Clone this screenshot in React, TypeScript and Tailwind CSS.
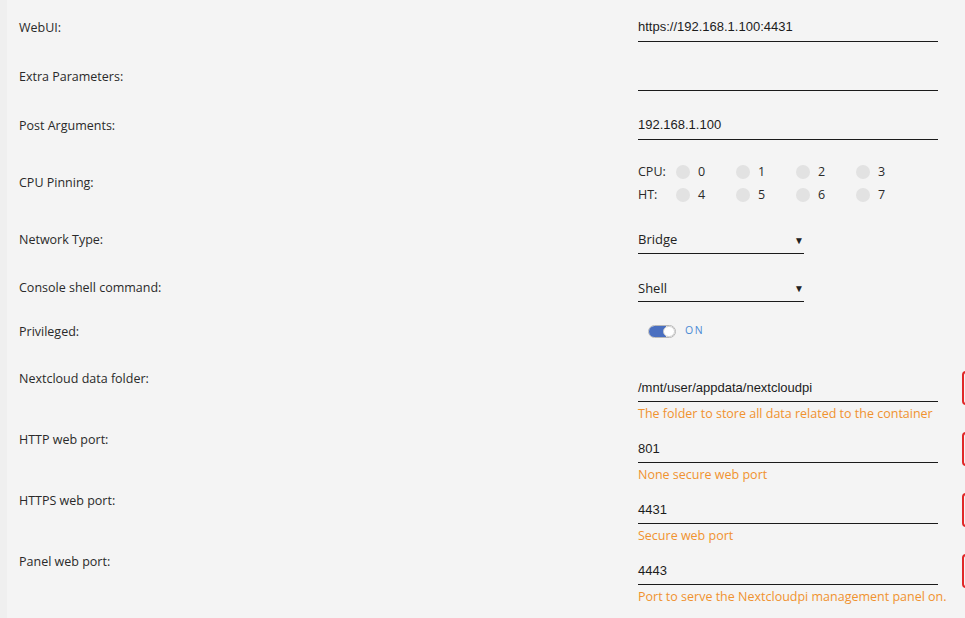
import { useState } from 'react';

const label = "text-[12.5px] text-[#2a2a2a] font-['Open_Sans',sans-serif]";
const value = "text-[13px] text-[#1c1c1c] font-['Liberation_Sans',Arial,sans-serif]";

function TextRow({ name, val, h = 'h-[49px]' }: { name: string; val: string; h?: string }) {
    return (
        <div className={`flex items-center ${h}`}>
            <div className={`w-[619px] pt-[2px] ${label}`}>{name}</div>
            <div className={`w-[300px] h-[28px] flex items-center border-b border-[#1a1a1a] ${value}`}>{val}</div>
        </div>
    );
}

function SelectRow({ name, val, h }: { name: string; val: string; h: string }) {
    return (
        <div className={`flex items-center ${h}`}>
            <div className={`w-[619px] pt-[2px] ${label}`}>{name}</div>
            <div className="w-[166px] h-[28px] mt-[1px] flex items-center justify-between border-b border-[#1a1a1a] text-[13px] text-[#222] font-['Open_Sans',sans-serif]">
                <span className="pt-[2px]">{val}</span>
                <span className="text-[10px] pt-[2px]">▼</span>
            </div>
        </div>
    );
}

function ConfigRow({ name, val, desc }: { name: string; val: string; desc: string }) {
    return (
        <div className="flex items-start mb-[10px]">
            <div className={`w-[619px] leading-[16px] ${label}`}>{name}</div>
            <div className="w-[300px] pt-[3px]">
                <div className={`h-[28px] pt-[1px] flex items-center border-b border-[#1a1a1a] ${value}`}>{val}</div>
                <div className="mt-[4px] leading-[16px] text-[12.5px] text-[#f0922f] font-['Open_Sans',sans-serif] whitespace-nowrap">{desc}</div>
            </div>
            <div className="ml-[24px] w-[60px] h-[34px] shrink-0 rounded-[4px] border-2 border-[#e02828]" />
        </div>
    );
}

function Dot() {
    return <span className="inline-block w-[14px] h-[14px] rounded-full bg-[#e2e2e2]" />;
}

export default function App() {
    const [on, setOn] = useState(true);
    const cpus = [[0, 1, 2, 3], [4, 5, 6, 7]];

    return (
        <div className="w-[965px] h-[618px] overflow-hidden bg-[#efefef] flex">
            <div className="w-[7px] shrink-0" />
            <div className="flex-1 bg-[#f4f4f4] pl-[12px] pt-[3px]">
                <TextRow name="WebUI:" val="https://192.168.1.100:4431" />
                <TextRow name="Extra Parameters:" val="" />
                <TextRow name="Post Arguments:" val="192.168.1.100" />

                {/* CPU pinning */}
                <div className="flex items-center h-[65px]">
                    <div className={`w-[619px] pt-[2px] ${label}`}>CPU Pinning:</div>
                    <div className="flex flex-col pt-[2px]">
                        {cpus.map((row, i) => (
                            <div key={i} className="flex items-center h-[23px]">
                                <span className={`w-[38px] pt-[1px] ${label}`}>{i === 0 ? 'CPU:' : 'HT:'}</span>
                                {row.map(n => (
                                    <span key={n} className="flex items-center w-[60px]">
                                        <Dot />
                                        <span className={`ml-[8px] pt-[1px] ${label}`}>{n}</span>
                                    </span>
                                ))}
                            </div>
                        ))}
                    </div>
                </div>

                <SelectRow name="Network Type:" val="Bridge" h="h-[48px]" />
                <SelectRow name="Console shell command:" val="Shell" h="h-[49px]" />

                {/* Privileged */}
                <div className="flex items-center h-[38px] mb-[21px]">
                    <div className={`w-[619px] pt-[2px] ${label}`}>Privileged:</div>
                    <button onClick={() => setOn(!on)} className="ml-[10px] flex items-center">
                        <span className="relative w-[28px] h-[13px] rounded-full border border-[#b8b8b8] bg-white overflow-hidden">
                            <span className={`absolute left-0 top-0 h-full ${on ? 'w-[17px]' : 'w-0'} bg-[#4a6fc0]`} />
                            <span className={`absolute top-[0px] ${on ? 'left-[14px]' : 'left-0'} w-[12px] h-[11px] rounded-full bg-white border border-[#c8c8c8]`} />
                        </span>
                        <span className="ml-[9px] text-[10.5px] tracking-[1.5px] text-[#4a8ad4] font-['Open_Sans',sans-serif]">{on ? 'ON' : 'OFF'}</span>
                    </button>
                </div>

                <ConfigRow name="Nextcloud data folder:" val="/mnt/user/appdata/nextcloudpi" desc="The folder to store all data related to the container" />
                <ConfigRow name="HTTP web port:" val="801" desc="None secure web port" />
                <ConfigRow name="HTTPS web port:" val="4431" desc="Secure web port" />
                <ConfigRow name="Panel web port:" val="4443" desc="Port to serve the Nextcloudpi management panel on." />
            </div>
        </div>
    );
}
